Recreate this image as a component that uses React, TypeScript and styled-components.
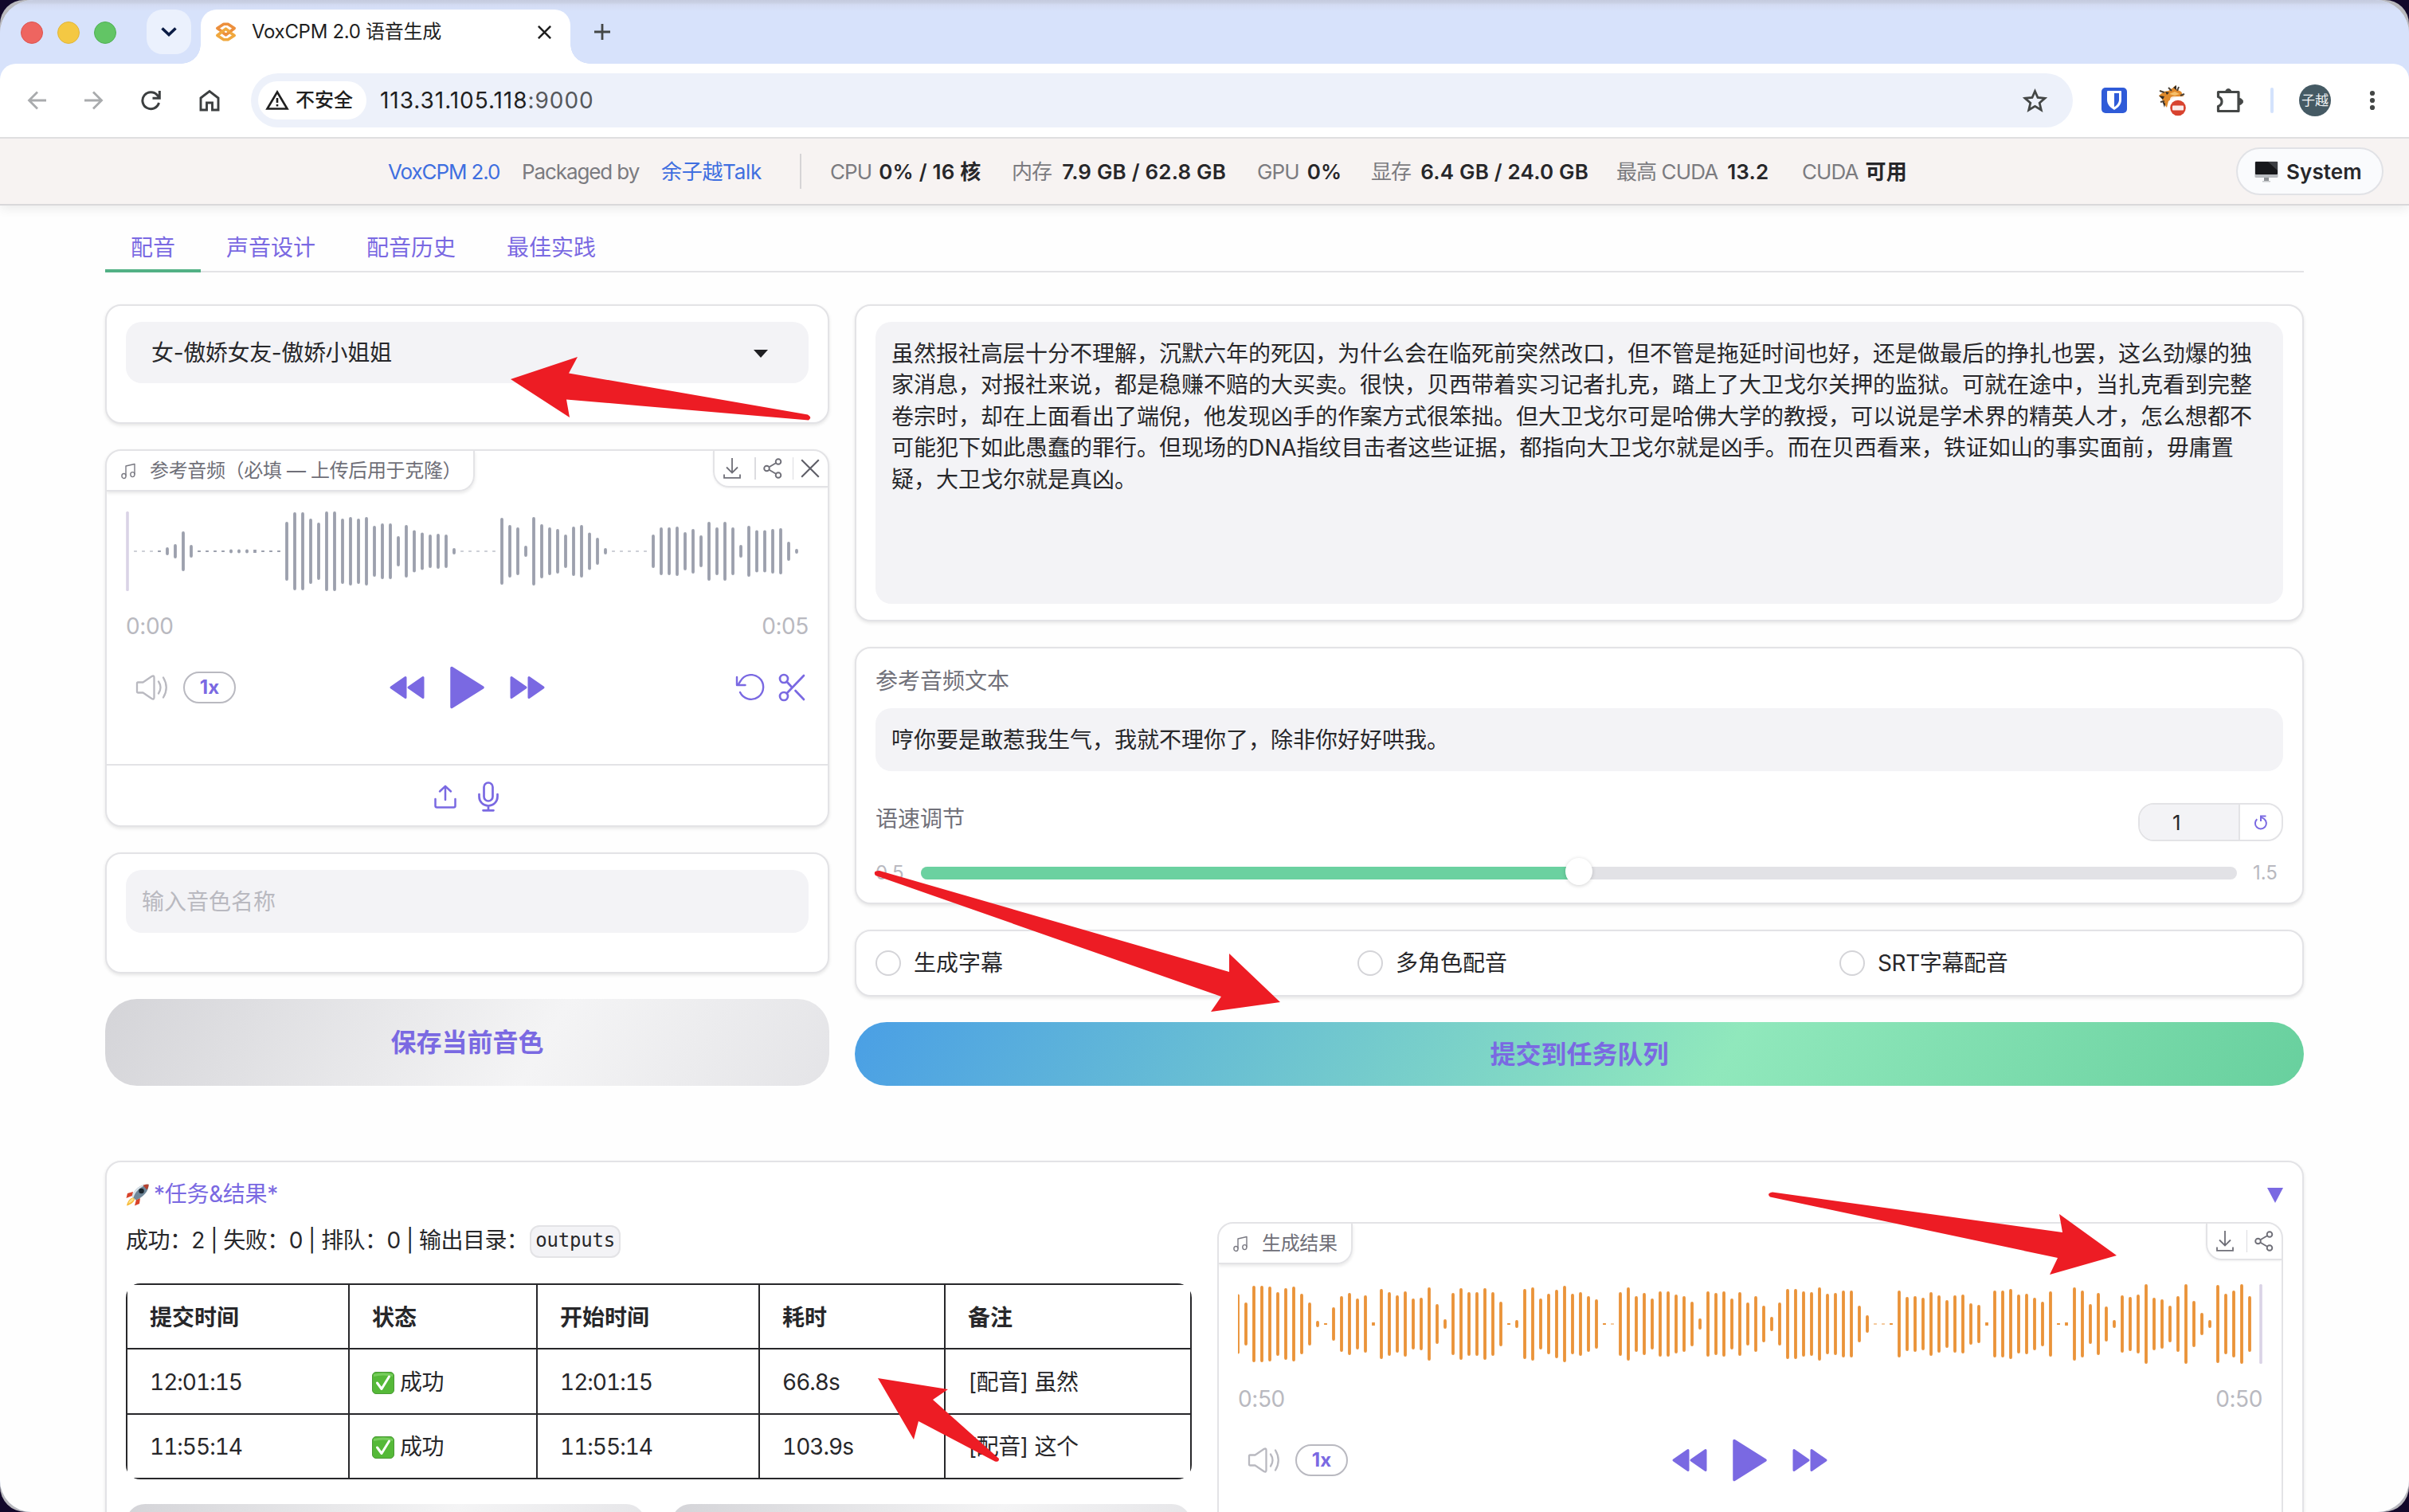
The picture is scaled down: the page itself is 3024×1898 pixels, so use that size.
import React from 'react';
import styled, { createGlobalStyle } from 'styled-components';

const PURPLE = '#7a69e2';
const LINE = '#e3e3e6';
const INK = '#27272a';
const FIELD = '#f3f3f6';
const MUTED = '#b9b9c0';

const Global = createGlobalStyle`
  * { box-sizing: border-box; }
  html, body { margin: 0; padding: 0; background: #12082a; overflow: hidden; }
  body {
    font-family: Inter, "Noto Sans CJK SC", sans-serif;
    font-size: 28px;
    line-height: 1.4;
    color: ${INK};
  }
`;

/* ---------- window ---------- */

const Backdrop = styled.div`
  width: 3024px;
  height: 1898px;
  overflow: hidden;
  border-radius: 30px 30px 32px 32px;
  background: #b9b9bd;
`;

const Window = styled.div`
  position: relative;
  display: flex;
  flex-direction: column;
  width: 3024px;
  height: 1898px;
  overflow: hidden;
  border-radius: 42px 42px 40px 40px;
  background: #d7e2fb;
`;

const TabStrip = styled.div`
  display: flex;
  flex: none;
  height: 80px;
  padding: 12px 0 0 26px;
  background: linear-gradient(#c5cbdf 0, #c8cfe2 3px, #d3dbf2 6px, #d7e2fb 14px);
`;

const Lights = styled.div`
  display: flex;
  gap: 18px;
  padding-top: 15px;
  width: 158px;
`;

const Light = styled.span<{ $c: string; $b: string }>`
  width: 28px;
  height: 28px;
  border-radius: 50%;
  background: ${(p) => p.$c};
  border: 1px solid ${(p) => p.$b};
`;

const TabSearch = styled.div`
  display: flex;
  align-items: center;
  justify-content: center;
  width: 56px;
  height: 56px;
  border-radius: 20px;
  background: #ebf1fd;
`;

const BrowserTab = styled.div`
  display: flex;
  align-items: center;
  position: relative;
  width: 464px;
  height: 68px;
  margin-left: 12px;
  padding: 0 24px 12px 18px;
  border-radius: 20px 20px 0 0;
  background: #fff;
  font-size: 24px;
  color: #1f1f1f;
  &::before, &::after {
    content: '';
    position: absolute;
    bottom: 0;
    width: 24px;
    height: 24px;
  }
  &::before { left: -24px; background: radial-gradient(circle at 0 0, transparent 23.5px, #fff 24px); }
  &::after { right: -24px; background: radial-gradient(circle at 100% 0, transparent 23.5px, #fff 24px); }
`;

const TabTitle = styled.span`
  margin-left: 19px;
  flex: 1;
  letter-spacing: -0.3px;
  white-space: nowrap;
`;

const NewTab = styled.div`
  margin: 18px 0 0 30px;
  line-height: 0;
`;

const Toolbar = styled.div`
  display: flex;
  align-items: center;
  flex: none;
  height: 94px;
  padding: 0 34px 0 34px;
  border-radius: 20px 20px 0 0;
  border-bottom: 2px solid #dfdfe0;
  background: #fff;
`;

const NavIcons = styled.div`
  display: flex;
  align-items: center;
  gap: 47.5px;
  width: 281px;
  line-height: 0;
`;

const AddressBar = styled.div`
  display: flex;
  align-items: center;
  width: 2287px;
  height: 68px;
  padding: 0 32px 0 9px;
  border-radius: 34px;
  background: #edf1fa;
`;

const SecurityChip = styled.div`
  display: flex;
  align-items: center;
  gap: 8px;
  width: 136px;
  height: 48px;
  padding-left: 9px;
  border-radius: 24px;
  background: #fff;
  font-size: 24px;
  font-weight: 500;
  color: #1f1f1f;
  white-space: nowrap;
`;

const Url = styled.div`
  flex: 1;
  margin-left: 17px;
  padding-top: 1px;
  font-size: 28px;
  letter-spacing: 0.95px;
  color: #1f1f1f;
  span { color: #55585c; }
`;

const Extensions = styled.div`
  display: flex;
  align-items: center;
  margin-left: 36px;
  line-height: 0;
`;

const ExtSlot = styled.div<{ $w: number; $gap: number }>`
  width: ${(p) => p.$w}px;
  margin-right: ${(p) => p.$gap}px;
`;

const ToolSeparator = styled.div`
  width: 4px;
  height: 32px;
  margin-right: 32px;
  border-radius: 2px;
  background: #d3e2fc;
`;

const Avatar = styled.div`
  display: flex;
  align-items: center;
  justify-content: center;
  width: 40px;
  height: 40px;
  margin-right: 48px;
  border-radius: 50%;
  background: #455a64;
  color: #f2f5f6;
  font-size: 17px;
  line-height: 1;
`;

/* ---------- page ---------- */

const Page = styled.div`
  flex: 1;
  min-height: 0;
  overflow: hidden;
  background: #fefefe;
`;

const SystemBar = styled.div`
  display: flex;
  align-items: center;
  position: relative;
  height: 84px;
  padding: 0 32px 0 487px;
  background: #f7f3f2;
  border-bottom: 2px solid #d9d8da;
  box-shadow: 0 3px 14px rgba(0, 0, 0, 0.09);
  font-size: 26px;
  line-height: 36px;
  letter-spacing: -0.35px;
  color: #7b7b80;
  white-space: nowrap;
`;

const BarCell = styled.div<{ $w: number; $link?: boolean; $ls?: number }>`
  width: ${(p) => p.$w}px;
  padding-top: 1px;
  letter-spacing: ${(p) => p.$ls ?? -1.1}px;
  color: ${(p) => (p.$link ? '#3f6fe0' : '#7b7b80')};
`;

const BarDivider = styled.div`
  width: 2px;
  height: 44px;
  margin-right: 36px;
  background: #d6d4d6;
`;

const Stat = styled.div<{ $w: number; $gap: number }>`
  display: flex;
  gap: ${(p) => p.$gap}px;
  width: ${(p) => p.$w}px;
  padding-top: 1px;
  letter-spacing: -0.9px;
  b { color: ${INK}; font-weight: 600; letter-spacing: 0.2px; }
`;

const SystemButton = styled.div`
  display: flex;
  align-items: center;
  gap: 10px;
  width: 185px;
  height: 60px;
  margin-left: auto;
  padding: 1px 0 0 21px;
  border: 2px solid #e1e2e6;
  border-radius: 30px;
  background: #fafbfd;
  color: ${INK};
  font-weight: 600;
  letter-spacing: 0.1px;
`;

const Content = styled.div`
  display: flex;
  flex-direction: column;
  width: 2760px;
  margin-left: 132px;
`;

const Tabs = styled.div`
  display: flex;
  height: 64px;
  margin: 20px 0 40px;
  box-shadow: inset 0 -2px 0 ${LINE};
`;

const TabItem = styled.div<{ $active?: boolean }>`
  display: flex;
  align-items: center;
  padding: 3px 32px 0;
  height: 64px;
  color: ${PURPLE};
  box-shadow: ${(p) => (p.$active ? 'inset 0 -4px 0 #52b185' : 'none')};
`;

const Columns = styled.div`
  display: grid;
  grid-template-columns: 909px 1819px;
  column-gap: 32px;
  align-items: start;
`;

const Column = styled.div`
  display: flex;
  flex-direction: column;
  gap: 32px;
`;

const Card = styled.div<{ $h: number }>`
  display: flex;
  flex-direction: column;
  flex: none;
  height: ${(p) => p.$h}px;
  padding: 20px 24px;
  border: 2px solid ${LINE};
  border-radius: 20px;
  background: #fff;
  box-shadow: 0 2px 4px rgba(0, 0, 0, 0.1);
`;

const Field = styled.div<{ $h: number; $pad: number; $muted?: boolean }>`
  display: flex;
  align-items: center;
  flex: none;
  height: ${(p) => p.$h}px;
  padding: 3px ${(p) => p.$pad}px 0;
  border-radius: 20px;
  background: ${FIELD};
  color: ${(p) => (p.$muted ? MUTED : INK)};
`;

const Select = styled(Field)`
  justify-content: space-between;
  padding: 2px 51px 0 32px;
  letter-spacing: -0.35px;
`;

const TextArea = styled.div`
  height: 354px;
  padding: 21px 20px;
  border-radius: 20px;
  background: ${FIELD};
  line-height: 39.4px;
  white-space: pre;
`;

const GradientButton = styled.div<{ $h: number; $kind: 'primary' | 'secondary'; $r?: number }>`
  display: flex;
  align-items: center;
  justify-content: center;
  flex: none;
  height: ${(p) => p.$h}px;
  padding-top: 2px;
  border-radius: ${(p) => p.$r ?? 40}px;
  background: ${(p) =>
    p.$kind === 'primary'
      ? 'linear-gradient(120deg, #4a9fe5 0%, #90e8bc 60%, #68d09e 100%)'
      : 'linear-gradient(120deg, #d4d4d8 0%, #f4f4f5 60%, #e4e4e7 100%)'};
  color: ${PURPLE};
  font-size: 32px;
  font-weight: 600;
`;

/* ---------- audio player ---------- */

const Player = styled.div<{ $h: number; $shadow?: boolean }>`
  display: flex;
  flex-direction: column;
  flex: none;
  height: ${(p) => p.$h}px;
  border: 2px solid ${LINE};
  border-radius: 20px;
  background: #fff;
  overflow: hidden;
  box-shadow: ${(p) => (p.$shadow ? '0 2px 4px rgba(0,0,0,.1)' : 'none')};
`;

const PlayerHead = styled.div`
  display: flex;
  justify-content: space-between;
  align-items: flex-start;
  height: 75px;
`;

const PlayerLabel = styled.div<{ $w: number }>`
  display: flex;
  align-items: center;
  gap: 18px;
  width: ${(p) => p.$w}px;
  height: 51px;
  padding: 1px 0 0 18px;
  border: 2px solid ${LINE};
  border-width: 0 2px 2px 0;
  border-radius: 0 0 20px 0;
  box-shadow: 0 2px 4px rgba(0, 0, 0, 0.1);
  font-size: 24px;
  letter-spacing: -0.35px;
  color: #6f6f78;
  white-space: nowrap;
`;

const HeadActions = styled.div`
  display: flex;
  align-items: center;
  gap: 9px;
  height: 46px;
  padding: 0 10px 0 11px;
  border: 2px solid ${LINE};
  border-width: 0 0 2px 2px;
  border-radius: 0 0 0 20px;
  box-shadow: 0 1px 3px rgba(0, 0, 0, 0.06);
`;

const ActionSep = styled.i<{ $l?: number }>`
  width: 1.5px;
  height: 28px;
  margin-left: ${(p) => p.$l ?? 0}px;
  background: #dcdce0;
`;

const Wave = styled.div`
  height: 104px;
  padding-left: 24px;
  line-height: 0;
`;

const Times = styled.div`
  display: flex;
  justify-content: space-between;
  margin: 23px 24px 0;
  height: 37px;
  line-height: 36px;
  color: ${MUTED};
  letter-spacing: -0.4px;
`;

const Controls = styled.div`
  display: grid;
  grid-template-columns: 1fr auto 1fr;
  align-items: center;
  margin: 28px 28px 0 36px;
  height: 60px;
  line-height: 0;
`;

const ControlGroup = styled.div<{ $gap: number; $end?: boolean; $shift?: number }>`
  display: flex;
  align-items: center;
  gap: ${(p) => p.$gap}px;
  justify-content: ${(p) => (p.$end ? 'flex-end' : 'flex-start')};
  margin-left: ${(p) => p.$shift ?? 0}px;
`;

const SpeedPill = styled.div`
  display: flex;
  align-items: center;
  justify-content: center;
  width: 66px;
  height: 40px;
  border: 2px solid ${MUTED};
  border-radius: 20px;
  color: ${PURPLE};
  font-size: 24px;
  font-weight: 700;
`;

const SourceRow = styled.div`
  display: flex;
  align-items: center;
  justify-content: center;
  gap: 27px;
  margin-top: auto;
  height: 77px;
  padding: 2px 3px 0 0;
  border-top: 2px solid ${LINE};
  line-height: 0;
`;

/* ---------- speed settings ---------- */

const FieldLabel = styled.div`
  flex: none;
  height: 55px;
  padding-top: 1px;
  line-height: 40px;
  color: #71717a;
`;

const SpeedRow = styled.div`
  display: flex;
  align-items: center;
  justify-content: space-between;
  flex: none;
  margin-top: 39px;
  height: 50px;
  color: #71717a;
  > span { margin-top: -6px; }
`;

const NumberBox = styled.div`
  display: flex;
  width: 182px;
  height: 48px;
  border: 2px solid ${LINE};
  border-radius: 20px;
  overflow: hidden;
  background: #fff;
`;

const NumberValue = styled.div`
  width: 126px;
  padding-left: 41px;
  border-right: 2px solid ${LINE};
  background: ${FIELD};
  font-size: 26px;
  line-height: 46px;
  color: ${INK};
`;

const ResetCell = styled.div`
  display: flex;
  flex: 1;
  align-items: center;
  justify-content: center;
`;

const SliderRow = styled.div`
  display: flex;
  align-items: center;
  flex: none;
  margin-top: 21px;
  height: 36px;
  font-size: 24px;
  color: ${MUTED};
`;

const RangeStart = styled.span`
  width: 57px;
`;

const SliderTrack = styled.div`
  display: flex;
  align-items: center;
  flex: none;
  width: 1652px;
  height: 16px;
  margin-right: 20px;
  border-radius: 8px;
  background: #e2e2e6;
`;

const SliderFill = styled.div`
  width: 50%;
  height: 16px;
  border-radius: 8px 0 0 8px;
  background: #6bd1a0;
`;

const SliderThumb = styled.div`
  width: 34px;
  height: 34px;
  margin: -4px 0 0 -17px;
  border-radius: 50%;
  background: #fff;
  box-shadow: 0 1px 5px rgba(0, 0, 0, 0.18);
`;

const OptionsCard = styled(Card)`
  flex-direction: row;
  align-items: center;
  padding: 0 24px;
`;

const Option = styled.div`
  display: flex;
  flex: none;
  align-items: center;
  gap: 16px;
  width: 605px;
  &:last-child { width: 420px; letter-spacing: -0.4px; }
  > span { padding-top: 2px; }
`;

const Radio = styled.i`
  width: 32px;
  height: 32px;
  border: 2px solid #d4d4d8;
  border-radius: 50%;
  background: #fff;
`;

/* ---------- results ---------- */

const ResultsCard = styled(Card)`
  margin-top: 94px;
  padding: 20px 24px;
`;

const ResultsHead = styled.div`
  display: flex;
  align-items: center;
  justify-content: space-between;
  flex: none;
  height: 42px;
  color: ${PURPLE};
`;

const HeadTitle = styled.div`
  display: flex;
  align-items: center;
  gap: 5px;
  letter-spacing: -0.3px;
`;

const ResultsBody = styled.div`
  display: grid;
  flex: none;
  grid-template-columns: 1337px 1338px;
  column-gap: 33px;
  margin-top: 13px;
`;

const StatusLine = styled.div`
  display: flex;
  align-items: center;
  height: 46px;
  padding-top: 2px;
  letter-spacing: -0.55px;
  white-space: pre;
`;

const Code = styled.code`
  display: flex;
  align-items: center;
  height: 41px;
  margin-left: 2px;
  padding: 0 5px;
  border: 2px solid ${LINE};
  border-radius: 12px;
  background: ${FIELD};
  font-family: "DejaVu Sans Mono", monospace;
  font-size: 24px;
  letter-spacing: -0.2px;
`;

const TableClip = styled.div`
  width: 1338px;
  margin: 31px 0 31px;
  border-radius: 18px;
  overflow: hidden;
`;

const Table = styled.table`
  width: 1338px;
  border-collapse: collapse;
  table-layout: fixed;
  font-variant-numeric: tabular-nums;
  th, td {
    height: 81.4px;
    padding: 3px 28px 0;
    border: 2px solid ${INK};
    text-align: left;
    white-space: nowrap;
    letter-spacing: -1px;
  }
  th { font-weight: 700; letter-spacing: 0; }
  td:nth-child(2), td:nth-child(5) { letter-spacing: -0.4px; }
`;

const StatusCell = styled.span`
  display: flex;
  align-items: center;
  gap: 7px;
`;

const ButtonPair = styled.div`
  display: grid;
  grid-template-columns: 1fr 1fr;
  gap: 33px;
`;

const Annotations = styled.svg`
  position: absolute;
  left: 0;
  top: 0;
  pointer-events: none;
`;

/* ---------- icons ---------- */

const DownloadIcon = () => (
  <svg width="22" height="26" viewBox="0 0 22 26" fill="none" stroke="#6f6f78" strokeWidth="1.8">
    <path d="M11 0V18M4 11.5L11 18.5L18 11.5M1 20.5V24.8H21V20.5" />
  </svg>
);

const ShareIcon = () => (
  <svg width="24" height="26" viewBox="0 0 24 26" fill="none" stroke="#6f6f78" strokeWidth="1.9">
    <circle cx="4.5" cy="13" r="3.3" />
    <circle cx="19" cy="4.5" r="3.3" />
    <circle cx="19" cy="21.5" r="3.3" />
    <path d="M7.5 11.3L16 6.3M7.5 14.7L16 19.7" />
  </svg>
);

const CloseIcon = ({ s, w, c }: { s: number; w: number; c: string }) => (
  <svg width={s} height={s} viewBox="0 0 20 20" stroke={c} strokeWidth={w}>
    <path d="M1 1L19 19M19 1L1 19" />
  </svg>
);

const MusicIcon = () => (
  <svg width="18" height="21" viewBox="0 0 18 21" fill="none" stroke="#7a7a83" strokeWidth="1.4" strokeLinejoin="round">
    <path d="M6 16.5V4L17 1.5V14.5" />
    <ellipse cx="3.5" cy="16.5" rx="2.6" ry="3" />
    <ellipse cx="14.4" cy="14.6" rx="2.6" ry="3" />
  </svg>
);

const VolumeIcon = () => (
  <svg width="42" height="32" viewBox="0 0 42 32" fill="none" stroke={MUTED} strokeWidth="2.3" strokeLinecap="round" strokeLinejoin="round">
    <path d="M3 9.5Q2 9.5 2 10.5V21.5Q2 22.5 3 22.5H9.5L20.5 30Q23.5 31.5 23.5 28.5V3.5Q23.5 .5 20.5 2L9.5 9.5Z" />
    <path d="M29 8.5Q34 16 29 23.5M35 3.5Q42.500 16 35 28.500" />
  </svg>
);

const RewindIcon = ({ flip }: { flip?: boolean }) => (
  <svg width="44" height="30" viewBox="0 0 44 30" fill={PURPLE} stroke={PURPLE} strokeWidth="3" strokeLinejoin="round">
    <g transform={flip ? 'translate(44 0) scale(-1 1)' : undefined}>
      <path d="M2 15L20 2.5V27.5ZM24 15L42 2.5V27.5Z" />
    </g>
  </svg>
);

const PlayIcon = () => (
  <svg width="43" height="54" viewBox="0 0 43 54" fill={PURPLE} stroke={PURPLE} strokeWidth="3.5" strokeLinejoin="round">
    <path d="M2 2.5L41 27L2 51.5Z" />
  </svg>
);

const UndoIcon = () => (
  <svg width="38" height="34" viewBox="0 0 38 34" fill="none" stroke={PURPLE} strokeWidth="2.4" strokeLinecap="round" strokeLinejoin="round">
    <path d="M2 4V14H12.5" />
    <path d="M3.5 13.5L6.5 9A15.3 15.3 0 1 1 6 23" />
  </svg>
);

const ScissorsIcon = () => (
  <svg width="34" height="36" viewBox="0 0 34 36" fill="none" stroke={PURPLE} strokeWidth="2.7" strokeLinecap="round">
    <circle cx="7" cy="7" r="5" />
    <circle cx="7" cy="29" r="5" />
    <path d="M32 3L10.5 25.5M21.5 22L32 33M10.5 10.5L16 16.5" />
  </svg>
);

const UploadIcon = () => (
  <svg width="28" height="30" viewBox="0 0 28 30" fill="none" stroke={PURPLE} strokeWidth="2.5" strokeLinecap="round" strokeLinejoin="round">
    <path d="M14 19V2M7 8.5L14 1.8L21 8.5M1.5 18V26.5Q1.5 28.5 3.5 28.5H24.5Q26.5 28.5 26.5 26.5V18" />
  </svg>
);

const MicIcon = () => (
  <svg width="26" height="38" viewBox="0 0 26 38" fill="none" stroke={PURPLE} strokeWidth="2.7" strokeLinecap="round">
    <rect x="7.5" y="1.5" width="11" height="23" rx="5.5" />
    <path d="M1.5 16V19A11.5 11.5 0 0 0 24.5 19V16M13 30.5V36M6.5 36.3H19.5" />
  </svg>
);

const ResetIcon = () => (
  <svg width="18" height="20" viewBox="0 0 18 20" fill="none" stroke={PURPLE} strokeWidth="2">
    <path d="M9 3.5L13.500 6.200A7 7 0 1 1 4.300 6.200" />
    <path d="M9 9V2.500H15.500" />
  </svg>
);

const MonitorEmoji = () => (
  <svg width="30" height="27" viewBox="0 0 30 27">
    <rect x=".5" y=".5" width="29" height="20.5" rx="1.5" fill="#b9bcc0" />
    <rect x="1" y="1" width="28" height="16" rx="1" fill="#17181b" />
    <path d="M17 1H29V12Z" fill="#3c3e42" />
    <path d="M12 21H18V25H12Z" fill="#8f9296" />
    <path d="M10 25H20V26.5H10Z" fill="#c4c7ca" />
  </svg>
);

const RocketEmoji = () => (
  <svg width="30" height="28" viewBox="0 0 30 28">
    <path d="M10 17C5 18 2 22 1 27.5C6 26 9 24 11 20Z" fill="#f7b733" />
    <path d="M9 18C6 19 4 21 3 25C6 24 8 22 10 20Z" fill="#fbe28a" />
    <path d="M9 10L2 12L.5 18L8 15ZM18 18L17 25L11 27.5L13 20Z" fill="#d8432b" />
    <path d="M28.5 .8C20 0 11 6 7.5 15.5L12.5 20.5C22 17 29 9 28.5 .8Z" fill="#6f8799" />
    <path d="M28.5 .8C20 0 11 6 7.5 15.5L9.5 17.5C12 9 19 3 28.5 .8Z" fill="#dbe4ea" />
    <path d="M28.5 .8C26 .5 23.5 1 21.5 2L26.5 7.5C28 5.5 28.6 3 28.5 .8Z" fill="#b7412f" />
    <circle cx="19.5" cy="9" r="3.3" fill="#1c2730" />
  </svg>
);

const CheckEmoji = () => (
  <svg width="28" height="28" viewBox="0 0 28 28">
    <rect x=".5" y=".5" width="27" height="27" rx="4.5" fill="#55b938" stroke="#4b9a37" />
    <path d="M2 3Q14 0 26 3V6Q14 3 2 6Z" fill="#86d56c" opacity=".7" />
    <path d="M6.5 14L12 21.5L21.5 6" fill="none" stroke="#fff" strokeWidth="3" strokeLinecap="round" strokeLinejoin="round" />
  </svg>
);

const VoxLogo = () => (
  <svg width="27" height="24" viewBox="0 0 27 24" fill="none" strokeWidth="3.6" strokeLinejoin="round">
    <path d="M8 11L2.8 7.5L10.8 2.2H16.2L24.2 7.5L13.5 15.8L8.500 12" stroke="#ec8f3c" />
    <path d="M19 13L24.2 16.5L16.2 21.8H10.8L2.8 16.5L13.5 8.2L18.500 12" stroke="#f0a83e" />
  </svg>
);

const FoxIcon = () => (
  <svg width="38" height="40" viewBox="0 0 38 40">
    <path d="M2 14L8 9L14 8L20 4L23 1L24 6L30 9L33 15L26 16L20 17L14 21L12 29L8 24L6 18Z" fill="#e08a2c" />
    <path d="M2 14L9 15L7 19ZM20 4L24 1V7ZM10 9L15 10L12 13ZM6 20L10 24L9 29Z" fill="#2e2a26" />
    <path d="M3 8L9 10M14 4L18 8M27 3L25 8M34 12L29 14M4 22L9 21" stroke="#4a4137" strokeWidth="2" />
    <path d="M15 12L22 9L28 12L22 14Z" fill="#f6c06a" />
    <path d="M16 19Q16 15 21 15H34V38H14V24Z" fill="#fff" opacity=".85" />
    <circle cx="26" cy="29.5" r="9.8" fill="#d8432f" />
    <rect x="19" y="26.5" width="14" height="6" rx="1" fill="#fbeceb" />
  </svg>
);

/* ---------- data ---------- */

const referenceWave = [
  1, 1, 1, 2, 10, 18, 50, 16, 2, 2, 2, 2, 5, 5, 5, 4, 2, 2, 2, 74, 98, 98, 82, 72, 100, 100, 82, 86, 82, 86, 64, 70,
  70, 38, 66, 53, 47, 42, 44, 42, 8, 1, 1, 1, 1, 1, 84, 66, 60, 14, 86, 68, 60, 56, 42, 62, 66, 47, 34, 8, 1, 1, 1, 1,
  1, 42, 60, 60, 62, 48, 56, 40, 74, 60, 74, 60, 16, 64, 53, 53, 56, 58, 24, 6,
];

const resultWave = [
  75, 54, 96, 96, 94, 80, 90, 94, 76, 54, 8, 2, 42, 70, 78, 64, 72, 4, 88, 80, 72, 82, 64, 66, 92, 50, 12, 78, 90, 80,
  80, 90, 80, 56, 2, 10, 88, 92, 64, 76, 86, 96, 76, 80, 70, 62, 2, 1, 80, 92, 70, 78, 64, 82, 82, 74, 70, 56, 14, 82,
  78, 82, 64, 80, 54, 70, 46, 18, 54, 88, 88, 82, 80, 92, 76, 78, 84, 84, 46, 22, 1, 1, 2, 84, 68, 70, 66, 80, 72, 60,
  72, 74, 52, 48, 4, 84, 84, 88, 74, 76, 66, 56, 82, 2, 4, 92, 84, 50, 78, 44, 10, 72, 68, 74, 100, 66, 62, 46, 70,
  100, 58, 28, 10, 98, 76, 84, 100, 70,
];

const articleLines = [
  '虽然报社高层十分不理解，沉默六年的死囚，为什么会在临死前突然改口，但不管是拖延时间也好，还是做最后的挣扎也罢，这么劲爆的独',
  '家消息，对报社来说，都是稳赚不赔的大买卖。很快，贝西带着实习记者扎克，踏上了大卫戈尔关押的监狱。可就在途中，当扎克看到完整',
  '卷宗时，却在上面看出了端倪，他发现凶手的作案方式很笨拙。但大卫戈尔可是哈佛大学的教授，可以说是学术界的精英人才，怎么想都不',
  '可能犯下如此愚蠢的罪行。但现场的DNA指纹目击者这些证据，都指向大卫戈尔就是凶手。而在贝西看来，铁证如山的事实面前，毋庸置',
  '疑，大卫戈尔就是真凶。',
];

const stats = [
  { label: 'CPU', value: '0% / 16 核', w: 228, gap: 9 },
  { label: '内存', value: '7.9 GB / 62.8 GB', w: 308, gap: 13 },
  { label: 'GPU', value: '0%', w: 143, gap: 10 },
  { label: '显存', value: '6.4 GB / 24.0 GB', w: 308, gap: 12 },
  { label: '最高 CUDA', value: '13.2', w: 233, gap: 12 },
  { label: 'CUDA', value: '可用', w: 140, gap: 9 },
];

const tasks = [
  { submitted: '12:01:15', started: '12:01:15', cost: '66.8s', note: '[配音] 虽然' },
  { submitted: '11:55:14', started: '11:55:14', cost: '103.9s', note: '[配音] 这个' },
];

const Waveform = ({ bars, first, color, cursor, width }: { bars: number[]; first: number; color: string; cursor: number; width: number }) => (
  <svg width={width} height="102" viewBox={`0 0 ${width} 102`}>
    {bars.map((h, i) => (
      <rect key={i} x={first + i * 10 - 1.9} y={51 - h / 2} width="3.8" height={h} rx={h > 4 ? 1.9 : 0} fill={color} />
    ))}
    <rect x={cursor - 1.8} y="1" width="3.6" height="100" rx="1.5" fill="#dad3e6" />
  </svg>
);

const Transport = () => (
  <>
    <RewindIcon />
    <PlayIcon />
    <RewindIcon flip />
  </>
);

export default function App() {
  return (
    <>
      <Global />
      <Backdrop>
        <Window>
          <TabStrip>
            <Lights>
              <Light $c="#ee6560" $b="#dc5450" />
              <Light $c="#f4c843" $b="#e0b53a" />
              <Light $c="#62c565" $b="#50b054" />
            </Lights>
            <TabSearch>
              <svg width="20" height="12" viewBox="0 0 20 12" fill="none" stroke="#0b1c45" strokeWidth="3.6">
                <path d="M1.5 1.5L10 9.5L18.5 1.5" />
              </svg>
            </TabSearch>
            <BrowserTab>
              <VoxLogo />
              <TabTitle>VoxCPM 2.0 语音生成</TabTitle>
              <CloseIcon s={17} w={3} c="#1f1f1f" />
            </BrowserTab>
            <NewTab>
              <svg width="20" height="20" viewBox="0 0 20 20" stroke="#444746" strokeWidth="2.8">
                <path d="M10 0V20M0 10H20" />
              </svg>
            </NewTab>
          </TabStrip>

          <Toolbar>
            <NavIcons>
              <svg width="24" height="24" viewBox="0 0 24 24" fill="none" stroke="#a9abad" strokeWidth="2.8">
                <path d="M24 12H2.5M13 1.5L2.5 12L13 22.5" />
              </svg>
              <svg width="24" height="24" viewBox="0 0 24 24" fill="none" stroke="#a9abad" strokeWidth="2.8">
                <path d="M0 12H21.5M11 1.5L21.5 12L11 22.5" />
              </svg>
              <svg width="25" height="26" viewBox="0 0 25 26" fill="none" stroke="#3c3f40" strokeWidth="3">
                <path d="M22.5 16A10.5 10.5 0 1 1 20.5 6.5L23 9.5" />
                <path d="M23.3 1V10.3H14.5" />
              </svg>
              <svg width="26" height="28" viewBox="0 0 26 28" fill="none" stroke="#3c3f40" strokeWidth="2.9">
                <path d="M2 11L13 2.5L24 11V26H16.5V17H9.5V26H2Z" />
              </svg>
            </NavIcons>
            <AddressBar>
              <SecurityChip>
                <svg width="30" height="26" viewBox="0 0 30 26" fill="none" stroke="#1f1f1f" strokeWidth="2.6">
                  <path d="M15 2.5L27.5 23.5H2.5ZM15 10V16M15 18V20.5" />
                </svg>
                不安全
              </SecurityChip>
              <Url>113.31.105.118<span>:9000</span></Url>
              <svg width="31" height="30" viewBox="0 0 31 30" fill="none" stroke="#444746" strokeWidth="2.8">
                <path d="M15.5 3.5L19 11.5L28 12.3L21.2 18.2L23.3 27L15.5 22.3L7.7 27L9.8 18.2L3 12.3L12 11.5Z" />
              </svg>
            </AddressBar>
            <Extensions>
              <ExtSlot $w={32} $gap={38}>
                <svg width="32" height="32" viewBox="0 0 32 32">
                  <rect width="32" height="32" rx="5" fill="#2f5bd8" />
                  <path d="M7 5Q7 4 8 4H24Q25 4 25 5V15C25 21 21 25 16 28C11 25 7 21 7 15Z" fill="#fff" />
                  <path d="M16 7H22V15C22 19 19.5 22 16 24.3Z" fill="#2f5bd8" />
                </svg>
              </ExtSlot>
              <ExtSlot $w={38} $gap={36}>
                <FoxIcon />
              </ExtSlot>
              <ExtSlot $w={34} $gap={34}>
                <svg width="34" height="34" viewBox="0 0 34 34" fill="none" stroke="#444746" strokeWidth="3.2" strokeLinejoin="round">
                  <path d="M2.5 6.5H28V30.5H2.5V24.5Q7 23 7 18.5Q7 14 2.5 12.5Z" />
                  <path d="M11.5 5.5A4 4.5 0 0 1 19 5.5ZM29 14.5A4.5 4 0 0 1 29 22.5Z" fill="#444746" strokeWidth="1" />
                </svg>
              </ExtSlot>
              <ToolSeparator />
              <Avatar>子越</Avatar>
              <svg width="8" height="28" viewBox="0 0 8 28" fill="#444746">
                <circle cx="4" cy="5" r="3.1" />
                <circle cx="4" cy="14" r="3.1" />
                <circle cx="4" cy="23" r="3.1" />
              </svg>
            </Extensions>
          </Toolbar>

          <Page>
            <SystemBar>
              <BarCell $w={168} $link>VoxCPM 2.0</BarCell>
              <BarCell $w={175}>Packaged by</BarCell>
              <BarCell $w={174} $link $ls={-0.3}>余子越Talk</BarCell>
              <BarDivider />
              {stats.map((s, i) => (
                <Stat key={i} $w={s.w} $gap={s.gap}>
                  <span>{s.label}</span>
                  <b>{s.value}</b>
                </Stat>
              ))}
              <SystemButton>
                <MonitorEmoji />
                System
              </SystemButton>
            </SystemBar>

            <Content>
              <Tabs>
                <TabItem $active>配音</TabItem>
                <TabItem>声音设计</TabItem>
                <TabItem>配音历史</TabItem>
                <TabItem>最佳实践</TabItem>
              </Tabs>

              <Columns>
                <Column>
                  <Card $h={150}>
                    <Select $h={77} $pad={32}>
                      女-傲娇女友-傲娇小姐姐
                      <svg width="18" height="10" viewBox="0 0 18 10" fill="#1f1f22">
                        <path d="M0 0H18L9 10Z" />
                      </svg>
                    </Select>
                  </Card>

                  <Player $h={474} $shadow>
                    <PlayerHead>
                      <PlayerLabel $w={462}>
                        <MusicIcon />
                        参考音频（必填 — 上传后用于克隆）
                      </PlayerLabel>
                      <HeadActions>
                        <DownloadIcon />
                        <ActionSep $l={8} />
                        <ShareIcon />
                        <ActionSep $l={4} />
                        <CloseIcon s={24} w={1.8} c="#5f5f68" />
                      </HeadActions>
                    </PlayerHead>
                    <Wave>
                      <Waveform bars={referenceWave} first={12} color="#9ca0ad" cursor={2} width={857} />
                    </Wave>
                    <Times>
                      <span>0:00</span>
                      <span>0:05</span>
                    </Times>
                    <Controls>
                      <ControlGroup $gap={18}>
                        <VolumeIcon />
                        <SpeedPill>1x</SpeedPill>
                      </ControlGroup>
                      <ControlGroup $gap={32} $shift={-8}>
                        <Transport />
                      </ControlGroup>
                      <ControlGroup $gap={16} $end>
                        <UndoIcon />
                        <ScissorsIcon />
                      </ControlGroup>
                    </Controls>
                    <SourceRow>
                      <UploadIcon />
                      <MicIcon />
                    </SourceRow>
                  </Player>

                  <Card $h={152}>
                    <Field $h={79} $pad={20} $muted>
                      输入音色名称
                    </Field>
                  </Card>
                  <GradientButton $h={109} $kind="secondary">保存当前音色</GradientButton>
                </Column>

                <Column>
                  <Card $h={398}>
                    <TextArea>{articleLines.join('\n')}</TextArea>
                  </Card>

                  <Card $h={323}>
                    <FieldLabel>参考音频文本</FieldLabel>
                    <Field $h={79} $pad={20}>哼你要是敢惹我生气，我就不理你了，除非你好好哄我。</Field>
                    <SpeedRow>
                      <span>语速调节</span>
                      <NumberBox>
                        <NumberValue>1</NumberValue>
                        <ResetCell>
                          <ResetIcon />
                        </ResetCell>
                      </NumberBox>
                    </SpeedRow>
                    <SliderRow>
                      <RangeStart>0.5</RangeStart>
                      <SliderTrack>
                        <SliderFill />
                        <SliderThumb />
                      </SliderTrack>
                      <span>1.5</span>
                    </SliderRow>
                  </Card>

                  <OptionsCard $h={84}>
                    <Option><Radio /><span>生成字幕</span></Option>
                    <Option><Radio /><span>多角色配音</span></Option>
                    <Option><Radio /><span>SRT字幕配音</span></Option>
                  </OptionsCard>

                  <GradientButton $h={80} $kind="primary">提交到任务队列</GradientButton>
                </Column>
              </Columns>

              <ResultsCard $h={600}>
                <ResultsHead>
                  <HeadTitle>
                    <RocketEmoji />
                    *任务&amp;结果*
                  </HeadTitle>
                  <svg width="20" height="19" viewBox="0 0 20 19" fill={PURPLE}>
                    <path d="M0 0H20L10 19Z" />
                  </svg>
                </ResultsHead>
                <ResultsBody>
                  <div>
                    <StatusLine>
                      {'成功：2 | 失败：0 | 排队：0 | 输出目录：'}
                      <Code>outputs</Code>
                    </StatusLine>
                    <TableClip>
                      <Table>
                        <colgroup>
                          <col width="279" />
                          <col width="236" />
                          <col width="279" />
                          <col width="233" />
                          <col />
                        </colgroup>
                        <thead>
                          <tr>
                            <th>提交时间</th>
                            <th>状态</th>
                            <th>开始时间</th>
                            <th>耗时</th>
                            <th>备注</th>
                          </tr>
                        </thead>
                        <tbody>
                          {tasks.map((t) => (
                            <tr key={t.submitted}>
                              <td>{t.submitted}</td>
                              <td><StatusCell><CheckEmoji />成功</StatusCell></td>
                              <td>{t.started}</td>
                              <td>{t.cost}</td>
                              <td>{t.note}</td>
                            </tr>
                          ))}
                        </tbody>
                      </Table>
                    </TableClip>
                    <ButtonPair>
                      <GradientButton $h={80} $kind="secondary" $r={24} />
                      <GradientButton $h={80} $kind="secondary" $r={24} />
                    </ButtonPair>
                  </div>
                  <Player $h={560}>
                    <PlayerHead>
                      <PlayerLabel $w={168}>
                        <MusicIcon />
                        生成结果
                      </PlayerLabel>
                      <HeadActions>
                        <DownloadIcon />
                        <ActionSep $l={7} />
                        <ShareIcon />
                      </HeadActions>
                    </PlayerHead>
                    <Wave>
                      <Waveform bars={resultWave} first={0} color="#ea9339" cursor={1284} width={1287} />
                    </Wave>
                    <Times>
                      <span>0:50</span>
                      <span>0:50</span>
                    </Times>
                    <Controls>
                      <ControlGroup $gap={18}>
                        <VolumeIcon />
                        <SpeedPill>1x</SpeedPill>
                      </ControlGroup>
                      <ControlGroup $gap={32} $shift={-9}>
                        <Transport />
                      </ControlGroup>
                      <ControlGroup $gap={16} $end />
                    </Controls>
                  </Player>
                </ResultsBody>
              </ResultsCard>
            </Content>
          </Page>

          <Annotations width="3024" height="1898" viewBox="0 0 3024 1898" fill="#ed1c24">
            <path d="M641 476L725 448L714 468.5L1014 520.5Q1020 524 1015 527.5L711 501.5L715 524Z" />
            <path d="M1104 1093L1543 1220L1543 1197L1607 1258L1520 1270L1533 1251L1099 1099Q1095 1093 1104 1093Z" />
            <path d="M2225 1496.5L2589 1547L2585 1524L2657 1576L2573 1600L2583 1579L2222 1502.5Q2217 1498 2225 1496.5Z" />
            <path d="M1102 1730L1190 1744L1171 1757L1254 1831Q1254 1836 1249 1834.5L1153 1784L1147 1807Z" />
          </Annotations>
        </Window>
      </Backdrop>
    </>
  );
}
